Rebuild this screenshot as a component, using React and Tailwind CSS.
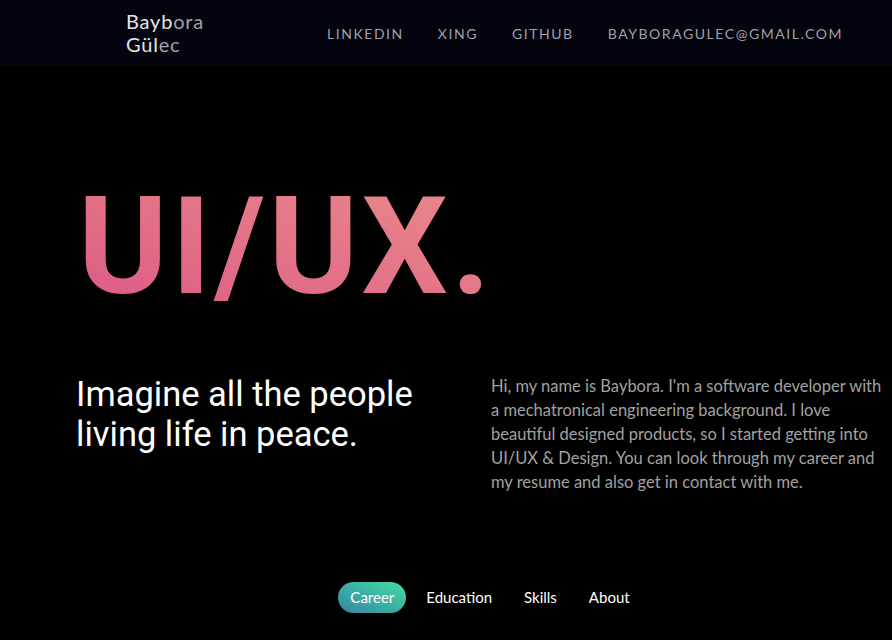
export default function App() {
  const futura = { fontFamily: "Lato, 'Noto Sans', sans-serif" };
  return (
    <div className="w-[892px] h-[640px] bg-black overflow-hidden flex flex-col" style={futura}>
      <header className="h-[66px] bg-[#04040e] flex items-center justify-between pl-[126px] pr-[49px] shrink-0">
        <div className="text-[20px] leading-[23px] tracking-[0.8px]">
          <div><span className="text-[#e4e4e8]">Bayb</span><span className="text-[#a3a3a8]">ora</span></div>
          <div><span className="text-[#e4e4e8]">Gül</span><span className="text-[#a3a3a8]">ec</span></div>
        </div>
        <nav className="flex gap-[34px] text-[14px] tracking-[1.55px] text-[#a0a0a8]">
          <span>LINKEDIN</span>
          <span>XING</span>
          <span>GITHUB</span>
          <span>BAYBORAGULEC@GMAIL.COM</span>
        </nav>
      </header>
      <div className="pl-[78px] pt-[106px]">
        <h1
          className="text-[136px] leading-[150px] font-bold bg-gradient-to-tr from-[#dc5884] to-[#ea8c8a] bg-clip-text text-transparent inline-block tracking-[3.5px]"
          style={{ fontFamily: "Roboto, sans-serif" }}
        >
          UI/UX.
        </h1>
      </div>
      <div className="flex mt-[52px]">
        <div
          className="pl-[76px] w-[491px] text-[34.5px] leading-[40px] text-white"
          style={{ fontFamily: "Roboto, sans-serif" }}
        >
          Imagine all the people
          <br />
          living life in peace.
        </div>
        <p className="w-[401px] text-[16.5px] leading-[24px] text-[#a2a2a2]">
          Hi, my name is Baybora. I'm a software developer with a mechatronical engineering background. I love beautiful designed products, so I started getting into UI/UX &amp; Design. You can look through my career and my resume and also get in contact with me.
        </p>
      </div>
      <div className="flex-1" />
      <div className="flex justify-center items-center gap-[20px] pb-[27px] text-[15px] text-white pl-[76px]">
        <span className="h-[31px] px-[12px] rounded-full bg-gradient-to-tr from-[#3784a2] to-[#44dca2] flex items-center">Career</span>
        <span>Education</span>
        <span className="px-[12px]">Skills</span>
        <span>About</span>
      </div>
    </div>
  );
}
